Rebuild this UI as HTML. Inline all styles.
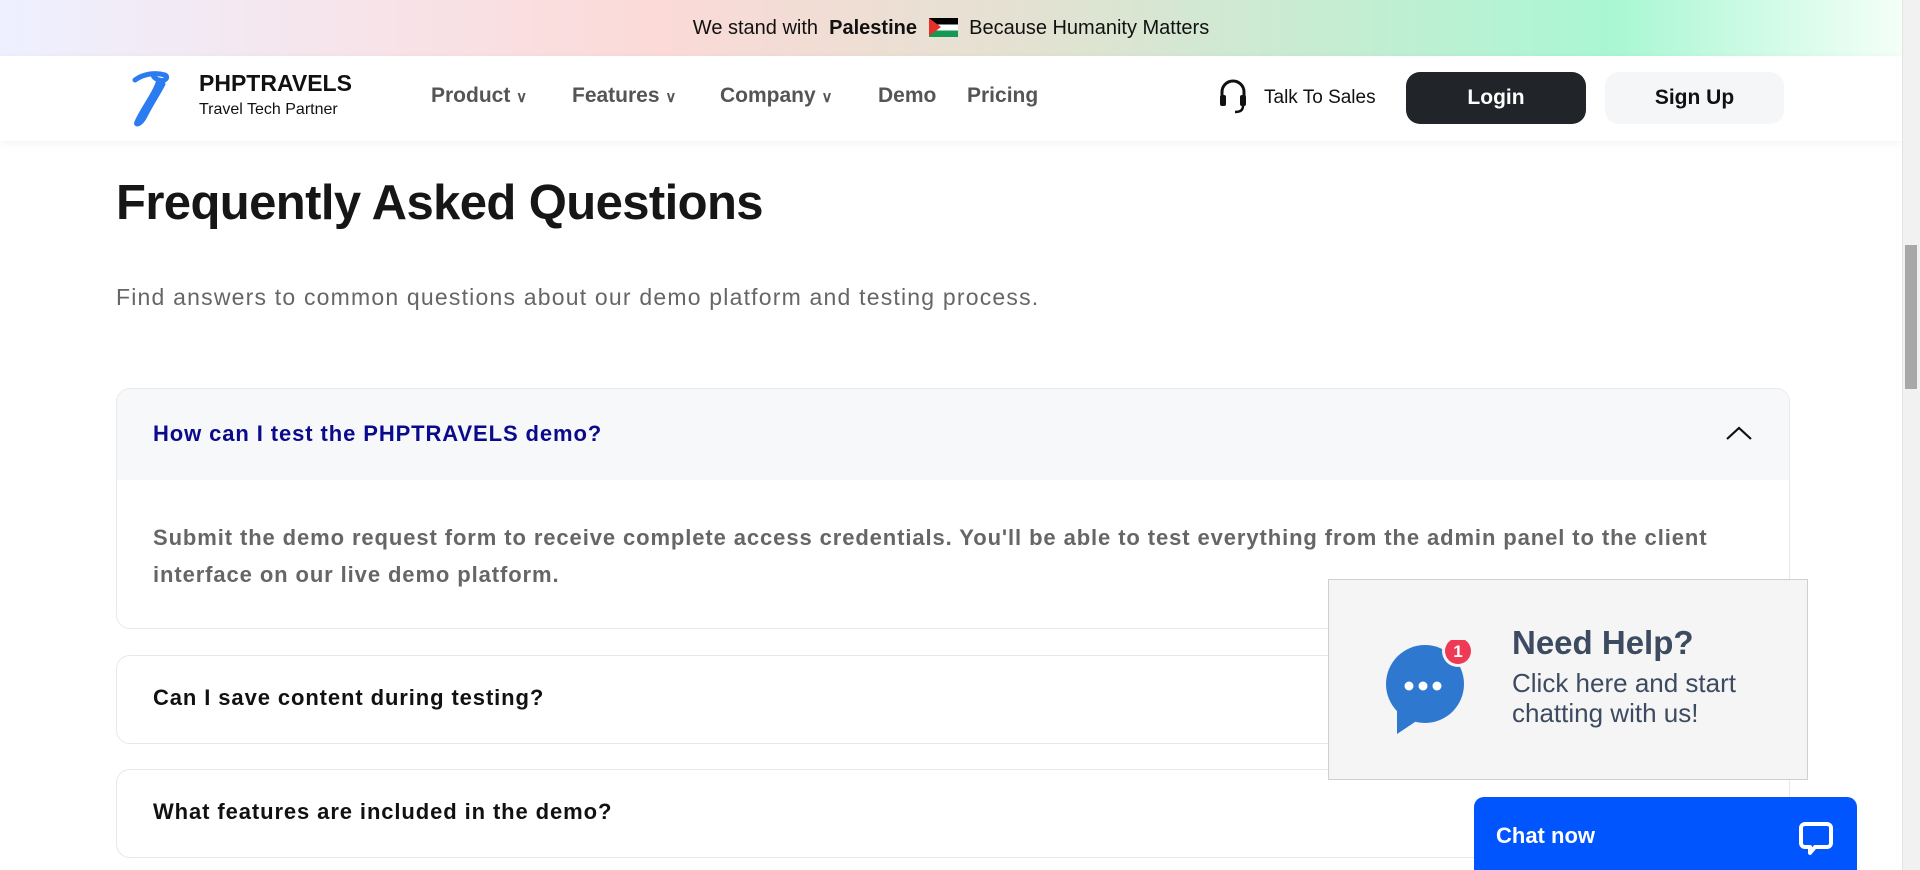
<!DOCTYPE html>
<html><head><meta charset="utf-8"><style>
*{margin:0;padding:0;box-sizing:border-box}
body{width:1920px;height:870px;overflow:hidden;background:#fff;font-family:"Liberation Sans",Arial,sans-serif;position:relative}
.banner{position:absolute;left:0;top:0;width:1902px;height:56px;background:linear-gradient(90deg,#eef0ff 0%,#f9e0e3 25%,#fbdad7 35%,#e2e2d2 55%,#a9f7d3 85%,#f4fff8 100%);text-align:center;line-height:56px;font-size:20px;color:#111}
.nav{position:absolute;left:0;top:56px;width:1902px;height:85px;background:#fff;box-shadow:0 2px 8px rgba(0,0,0,.05)}
.a{position:absolute;white-space:nowrap}
.scroll{position:absolute;right:0;top:0;width:18px;height:870px;background:#f1f1f1;border-left:1px solid #e3e3e3}
.thumb{position:absolute;right:3px;top:245px;width:12px;height:144px;background:#a8a8a8}
.card{position:absolute;left:116px;width:1674px;border:1px solid #e8e8ec;border-radius:14px;background:#fff;overflow:hidden}
.q{font-size:22px;font-weight:bold;color:#111;position:absolute;left:36px;letter-spacing:0.9px}
</style></head><body>
<div class="banner">We stand with &nbsp;<b>Palestine</b> <span style="display:inline-block;width:29px;height:19px;vertical-align:-3px;position:relative;background:linear-gradient(#000 0 33%,#fff 33% 66%,#149954 66%);margin:0 6px"><span style="position:absolute;left:0;top:0;width:0;height:0;border-top:9.5px solid transparent;border-bottom:9.5px solid transparent;border-left:12px solid #e4312b"></span></span> Because Humanity Matters</div>
<div class="nav">
<svg class="a" style="left:129px;top:14px" width="44" height="58" viewBox="0 0 44 58"><path d="M6 10 C14 4 26 2 36 5 C40 7 36 12 30 10 C24 8 22 4 28 4 M30 10 C26 24 14 38 8 52 C6 56 12 54 16 46 C22 34 30 22 34 14" fill="none" stroke="#2b7cf0" stroke-width="5" stroke-linecap="round"/></svg>
<div class="a" style="left:199px;top:14px;font-size:23px;font-weight:bold;color:#111">PHPTRAVELS</div>
<div class="a" style="left:199px;top:45px;font-size:16px;color:#111">Travel Tech Partner</div>
<div class="a" style="left:431px;top:28px;font-size:21px;font-weight:bold;color:#555">Product <span style="font-size:15px">&#8744;</span></div>
<div class="a" style="left:572px;top:28px;font-size:21px;font-weight:bold;color:#555">Features <span style="font-size:15px">&#8744;</span></div>
<div class="a" style="left:720px;top:28px;font-size:21px;font-weight:bold;color:#555">Company <span style="font-size:15px">&#8744;</span></div>
<div class="a" style="left:878px;top:28px;font-size:21px;font-weight:bold;color:#555">Demo</div>
<div class="a" style="left:967px;top:28px;font-size:21px;font-weight:bold;color:#555">Pricing</div>
<svg class="a" style="left:1218px;top:22px" width="30" height="38" viewBox="0 0 30 38"><path d="M4 20 V14 A11 11 0 0 1 26 14 V20" fill="none" stroke="#111" stroke-width="3"/><rect x="2" y="17" width="6" height="11" rx="2" fill="#111"/><rect x="22" y="17" width="6" height="11" rx="2" fill="#111"/><path d="M25 28 Q25 34 17 34" fill="none" stroke="#111" stroke-width="2.5"/></svg>
<div class="a" style="left:1264px;top:31px;font-size:19px;color:#111">Talk To Sales</div>
<div class="a" style="left:1406px;top:16px;width:180px;height:52px;border-radius:14px;background:#212529;color:#fff;font-size:21px;font-weight:bold;text-align:center;line-height:52px">Login</div>
<div class="a" style="left:1605px;top:16px;width:179px;height:52px;border-radius:14px;background:#f5f6f8;color:#111;font-size:21px;font-weight:bold;text-align:center;line-height:52px">Sign Up</div>
</div>
<div class="a" style="left:116px;top:175px;font-size:49px;font-weight:bold;color:#161616;letter-spacing:-0.6px">Frequently Asked Questions</div>
<div class="a" style="left:116px;top:284px;font-size:23px;color:#666;letter-spacing:1.2px">Find answers to common questions about our demo platform and testing process.</div>
<div class="card" style="top:388px;height:241px">
<div style="height:91px;background:#f7f8fa"></div>
<div class="q" style="top:32px;color:#0a0a8c">How can I test the PHPTRAVELS demo?</div>
<svg style="position:absolute;left:1608px;top:36px" width="28" height="16" viewBox="0 0 28 16"><path d="M2 14 L14 3 L26 14" fill="none" stroke="#111" stroke-width="2.2"/></svg>
<div style="position:absolute;left:36px;top:130px;width:1620px;font-size:22px;line-height:37px;color:#666;font-weight:bold;letter-spacing:0.9px">Submit the demo request form to receive complete access credentials. You'll be able to test everything from the admin panel to the client<br>interface on our live demo platform.</div>
</div>
<div class="card" style="top:655px;height:89px"><div class="q" style="top:29px">Can I save content during testing?</div></div>
<div class="card" style="top:769px;height:89px"><div class="q" style="top:29px">What features are included in the demo?</div></div>
<div class="a" style="left:1328px;top:579px;width:480px;height:201px;background:#f5f5f5;border:1px solid #cfcfcf">
<svg style="position:absolute;left:56px;top:60px" width="90" height="100" viewBox="0 0 90 100"><circle cx="40" cy="44" r="39" fill="#2f78d0"/><path d="M12 66 L12 94 L36 78 Z" fill="#2f78d0"/><circle cx="24" cy="46" r="4.5" fill="#fff"/><circle cx="38" cy="46" r="4.5" fill="#fff"/><circle cx="52" cy="46" r="4.5" fill="#fff"/><circle cx="73" cy="11" r="16" fill="#f5f5f5"/><circle cx="73" cy="11" r="13" fill="#ef3a55"/><text x="73" y="17" font-size="17" font-weight="bold" fill="#fff" text-anchor="middle" font-family="Liberation Sans">1</text></svg>
<div style="position:absolute;left:183px;top:44px;font-size:33px;font-weight:bold;color:#3d4b60">Need Help?</div>
<div style="position:absolute;left:183px;top:88px;font-size:26px;line-height:30px;color:#3d4b60">Click here and start<br>chatting with us!</div>
</div>
<div class="a" style="left:1474px;top:797px;width:383px;height:73px;background:#0055ff;border-radius:10px 10px 0 0">
<div style="position:absolute;left:22px;top:26px;font-size:22px;font-weight:bold;color:#fff">Chat now</div>
<svg style="position:absolute;left:325px;top:24px" width="34" height="36" viewBox="0 0 34 36"><path d="M6 3 H28 A4 4 0 0 1 32 7 V22 A4 4 0 0 1 28 26 H16 L11 32 V26 H6 A4 4 0 0 1 2 22 V7 A4 4 0 0 1 6 3 Z" fill="none" stroke="#fff" stroke-width="4" stroke-linejoin="round"/></svg>
</div>
<div class="scroll"><div class="thumb"></div></div>
</body></html>
